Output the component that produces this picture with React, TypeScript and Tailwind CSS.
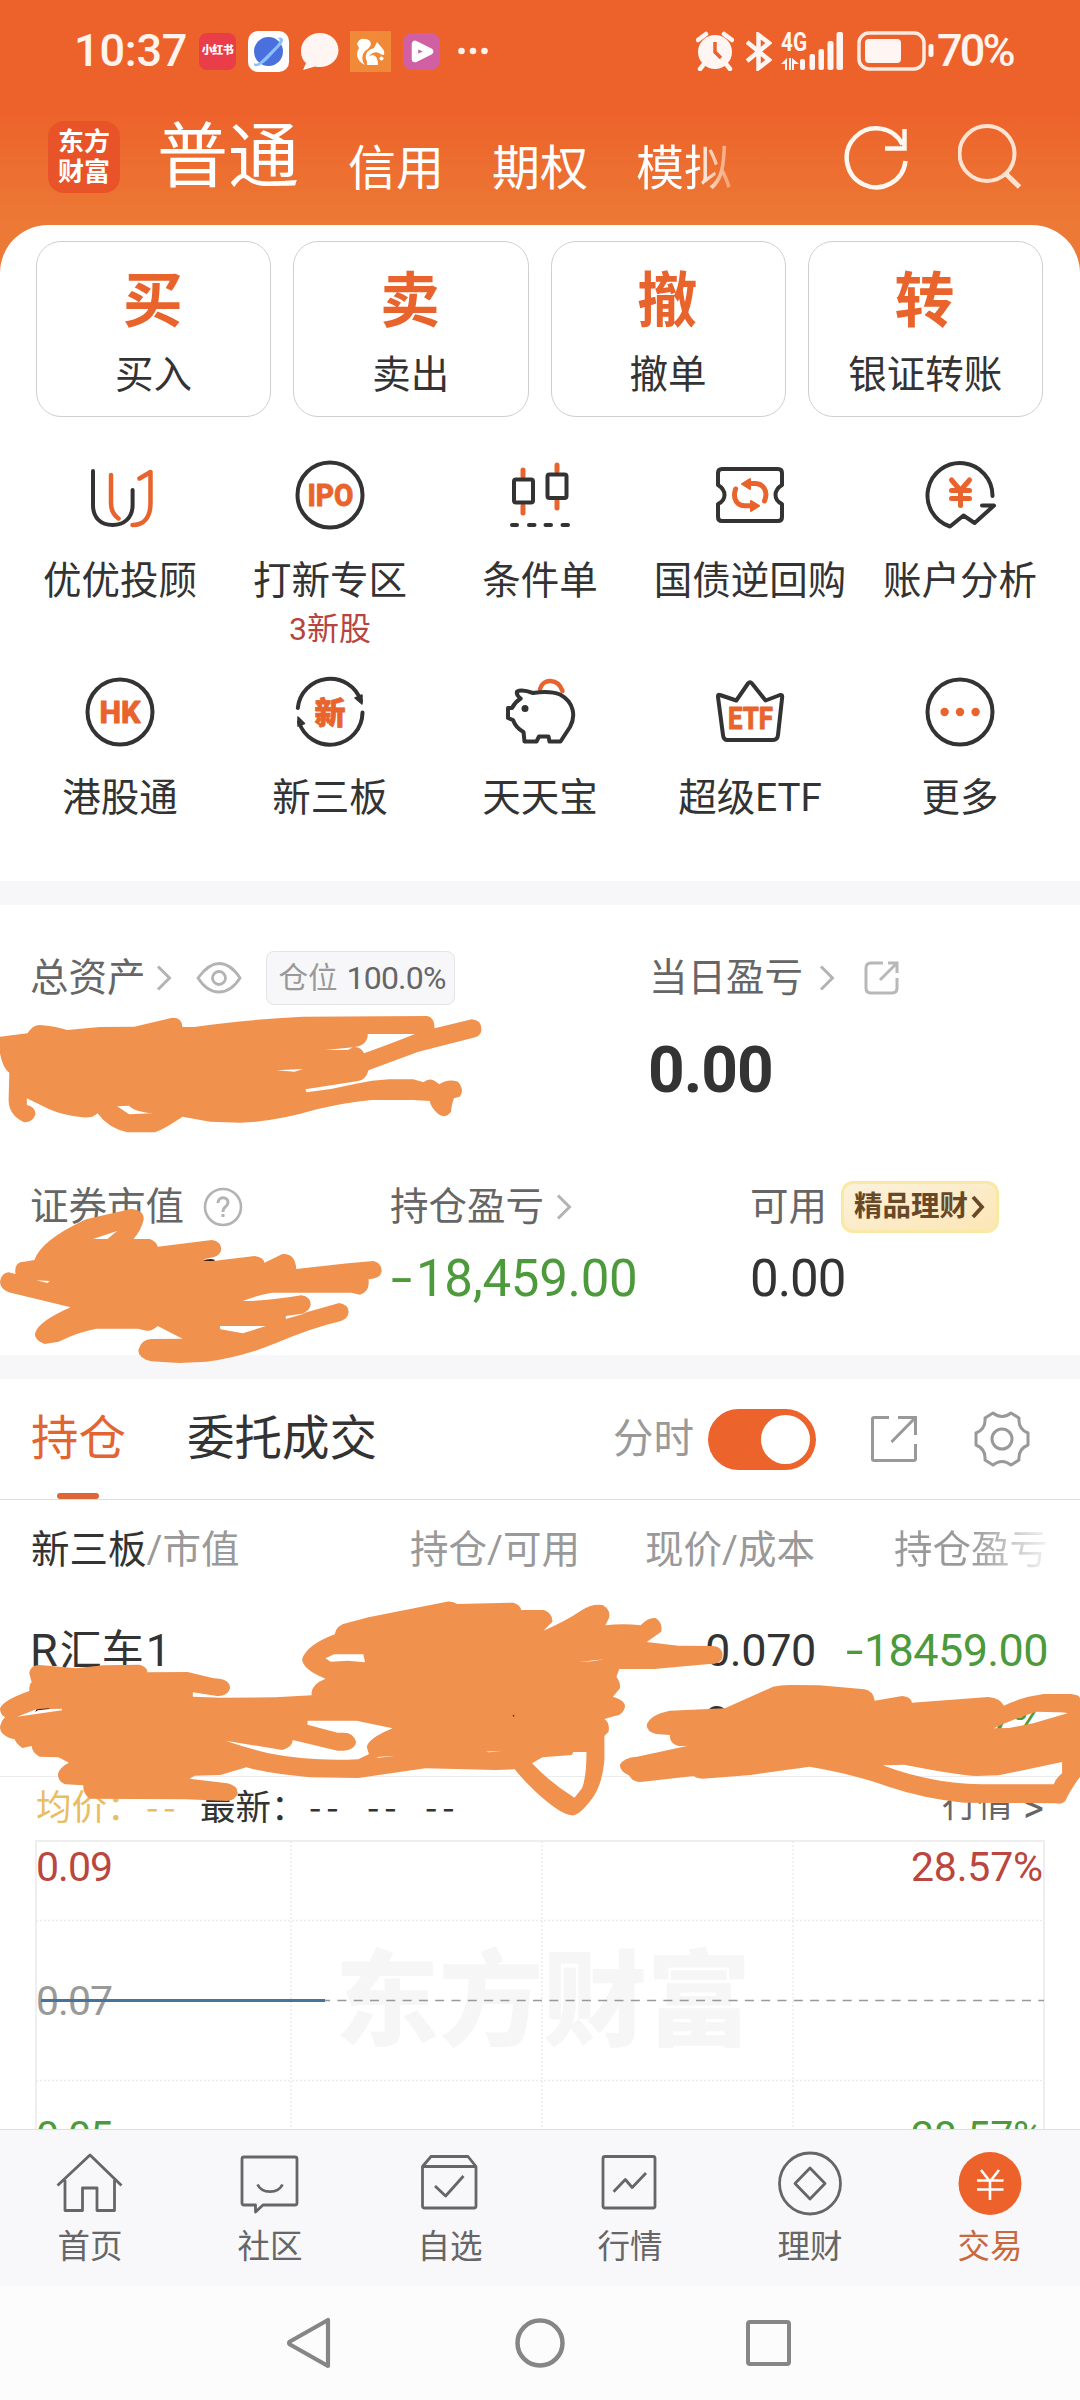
import type { ReactNode } from "react";

const INK = "#333333";
const ORANGE = "#e8642c";

const trades = [
  { glyph: "买", label: "买入" },
  { glyph: "卖", label: "卖出" },
  { glyph: "撤", label: "撤单" },
  { glyph: "转", label: "银证转账" },
];

function GridIcon({ children }: { children: ReactNode }) {
  return (
    <svg
      className="h-[68px] w-[68px] overflow-visible"
      viewBox="0 0 68 68"
      fill="none"
      stroke={INK}
      strokeWidth="4"
      strokeLinecap="round"
      strokeLinejoin="round"
    >
      {children}
    </svg>
  );
}

function IconText({ x = 34, y, size, width, children }: { x?: number; y: number; size: number; width?: number; children: string }) {
  return (
    <text
      x={x}
      y={y}
      fontSize={size}
      fontWeight="800"
      fill={ORANGE}
      stroke={ORANGE}
      strokeWidth="0.8"
      textAnchor="middle"
      textLength={width}
      lengthAdjust="spacingAndGlyphs"
    >
      {children}
    </text>
  );
}

const features: { label: string; note?: string; icon: ReactNode }[] = [
  {
    label: "优优投顾",
    icon: (
      <>
        <path d="M7 10V44C7 57 15 64 26.500 64S46.600 57 46.600 44V29" />
        <path stroke={ORANGE} strokeWidth="4.500" d="M25 14V42Q25 52 32.500 57.500M53.500 17.500L64.500 11V42C64.500 56 58 64 46.500 64" />
      </>
    ),
  },
  {
    label: "打新专区",
    note: "3新股",
    icon: (
      <>
        <circle cx="34" cy="34" r="32.500" />
        <IconText x={34.500} y={45} size={31} width={46}>IPO</IconText>
      </>
    ),
  },
  {
    label: "条件单",
    icon: (
      <>
        <path stroke={ORANGE} strokeWidth="5" d="M17 9V15M17 45V52M51 4V10M51 40V47" />
        <rect x="8" y="18.500" width="19" height="23" rx="2" />
        <rect x="41.500" y="13.500" width="19" height="23.500" rx="2" />
        <path d="M6 64H11M23 64H28.500M39.500 64H45M56.500 64H62" />
      </>
    ),
  },
  {
    label: "国债逆回购",
    icon: (
      <>
        <path d="M6 8H62Q66 8 66 12V24Q59.500 28 59.500 34T66 43V56Q66 60 62 60H6Q2 60 2 56V43Q8.500 40 8.500 34T2 24V12Q2 8 6 8Z" />
        <path stroke={ORANGE} strokeWidth="5" d="M48.500 40C53 29 46 22.500 39 22.500H33M19.600 28C16 39 22 44.800 29 44.800H35" />
        <path fill={ORANGE} stroke={ORANGE} strokeWidth="2" d="M34 18V28L26 23ZM35 40V50L43 44.800Z" />
      </>
    ),
  },
  {
    label: "账户分析",
    icon: (
      <>
        <path d="M66.500 35A32.500 32.500 0 1 0 24 65.500L37.500 54.500L48.600 62L68 44.600H56" />
        <path stroke={ORANGE} strokeWidth="5" d="M25.500 19L34.500 29.500L43.500 19M34.500 30V44.500M25.500 29.500H43.500M25.500 37.500H43.500" />
      </>
    ),
  },
  {
    label: "港股通",
    icon: (
      <>
        <circle cx="34" cy="34" r="32.500" />
        <IconText y={45} size={31} width={41}>HK</IconText>
      </>
    ),
  },
  {
    label: "新三板",
    icon: (
      <>
        <path d="M1.800 30A32.500 32.500 0 0 1 65 23M66.500 34.500A32.500 32.500 0 0 1 3 44" />
        <path fill={INK} strokeWidth="1.500" d="M59 20L66 17V26ZM2 39L8.500 45.500L2 48Z" />
        <IconText y={45.500} size={31}>新</IconText>
      </>
    ),
  },
  {
    label: "天天宝",
    icon: (
      <>
        <path stroke={ORANGE} strokeWidth="4.500" d="M34 11C37 0 52 0 56.500 13" />
        <path d="M11 13.500Q16 11 27 15Q44 12.500 54 16.500C68 24 70 38 64 49L54.500 63.500H43.500L42.500 58.500H33L30.500 63.500H18.500L17.500 54Q10 50 7 42L2 40V30H6Q9 24 14.700 20.500Q10 17 11 13.500Z" />
        <circle cx="19" cy="30.500" r="3.500" fill={INK} stroke="none" />
      </>
    ),
  },
  {
    label: "超级ETF",
    icon: (
      <>
        <path d="M4 17L20.300 22.500L32 5.500Q34 3 36 5.500L49.600 22.500L64 17Q66.500 16.500 66.200 19L62 57Q61.500 62 57 62H11.500Q7.500 62 7 57L2 19Q1.700 16 4 17Z" />
        <IconText x={34.500} y={51} size={31} width={45}>ETF</IconText>
      </>
    ),
  },
  {
    label: "更多",
    icon: (
      <>
        <circle cx="34" cy="34" r="32.500" />
        <g fill={ORANGE} stroke="none">
          <circle cx="18.600" cy="34" r="4.200" />
          <circle cx="34" cy="34" r="4.200" />
          <circle cx="49.600" cy="34" r="4.200" />
        </g>
      </>
    ),
  },
];

const tabs: { label: string; active?: boolean; icon: ReactNode }[] = [
  { label: "首页", icon: <path d="M3.500 38.500L36 8L67.500 38.500M11 33V63.500H28.500V41H43V63.500H60.500V33" /> },
  {
    label: "社区",
    icon: <path d="M10 10H61Q63 10 63 12V56Q63 58 61 58H29L21.500 65V58H10Q8 58 8 56V12Q8 10 10 10ZM23.500 37.500C28 47 44 47 48.500 37.500" />,
  },
  {
    label: "自选",
    icon: <path d="M8.500 19.500L17 9.500H54L62 19.500V59Q62 61 60 61H10.500Q8.500 61 8.500 59ZM8.500 19.500H62M21 39L31.600 49L49.500 29" />,
  },
  {
    label: "行情",
    icon: <path d="M11 9.500H59Q61 9.500 61 11.500V59Q61 61 59 61H11Q9 61 9 59V11.500Q9 9.500 11 9.500ZM19.600 44.700L31.300 32.500L38.200 40.500L52 26" />,
  },
  {
    label: "理财",
    icon: (
      <>
        <circle cx="36" cy="36.500" r="30.500" />
        <path d="M36 21L51 36.500L36 52L21 36.500Z" />
      </>
    ),
  },
  {
    label: "交易",
    active: true,
    icon: (
      <>
        <circle cx="36" cy="36.500" r="31.500" fill="#ed622b" stroke="none" />
        <path stroke="#fff" strokeWidth="2.600" d="M27 23L36 34.500L45 23M36 34.500V53M23 33.500H49.500M23 42.500H49.500" />
      </>
    ),
  },
];

function Chevron({ className = "" }: { className?: string }) {
  return (
    <svg className={className} width="16" height="26" viewBox="0 0 16 26" fill="none" stroke="#b3b3b3" strokeWidth="3">
      <path d="M2 1.500L13.500 13L2 24.500" />
    </svg>
  );
}

function StatusBar() {
  return (
    <div className="flex h-[102px] items-center pl-[74px] text-white">
      <span className="w-[125px] text-[45px] leading-[50px] font-medium tracking-[-0.200px] text-[#fff3ee]">10:37</span>
      <div className="flex h-[37px] w-[37px] items-center justify-center rounded-lg bg-[#e93e49] text-[11px] font-black tracking-[-0.500px]">小红书</div>
      <svg className="ml-3" width="41" height="41" viewBox="0 0 41 41">
        <rect width="41" height="41" rx="10" fill="#fff" />
        <circle cx="20.500" cy="20.500" r="14.500" fill="#4a70de" />
        <path d="M6 32C5 38 13 35 20 28L33 14C37 8 35 5 29 7C34 8 31 12 28 15L15 28C11 32 8 34 6 32Z" fill="#8cc0fb" />
      </svg>
      <svg className="ml-3" width="38" height="39" viewBox="0 0 38 39">
        <path d="M19 1C9 1 0 8 0 19Q0 27 5 31L2 38L14 34.500Q16 35 19 35C29 35 37.500 28 37.500 18S29 1 19 1Z" fill="#fff5f2" />
      </svg>
      <svg className="ml-[11px]" width="41" height="41" viewBox="0 0 41 41">
        <rect width="41" height="41" fill="#f08a38" />
        <path d="M7 13Q9 7 15 8Q20 8 21 13Q20 17 15 20Q11 25 13 31L15 34Q8 31 7 24Q7 20 9 17ZM27 11L32 17Q35 20 34 24Q31 24 29 22Q24 20 20 24Q17 28 18 32Q14 27 17 21Q20 18 24 17Z" fill="#fff" />
        <path d="M17 34Q16 24 23 24Q28 25 28 34Z" fill="#fff" />
        <circle cx="31.500" cy="27.500" r="2" fill="#fff" />
      </svg>
      <svg className="ml-3" width="37" height="37" viewBox="0 0 37 37">
        <rect width="37" height="37" rx="9" fill="#d05fa4" />
        <path d="M12 11V26L27 18.500Z" fill="#d05fa4" stroke="#fff" strokeWidth="6.500" strokeLinejoin="round" />
      </svg>
      <svg className="ml-[18px]" width="30" height="8" viewBox="0 0 30 8" fill="#fff0ea">
        <circle cx="3.500" cy="4" r="3.300" />
        <circle cx="15" cy="4" r="3.300" />
        <circle cx="26.500" cy="4" r="3.300" />
      </svg>
      <svg className="ml-[208px]" width="38" height="40" viewBox="0 0 38 40" fill="#fff5f2">
        <circle cx="19" cy="21" r="17" />
        <path d="M2 9L10 3M28 3L36 9M8 33L4 38M30 33L34 38" stroke="#fff5f2" strokeWidth="4.500" strokeLinecap="round" />
        <path d="M19 11V21L25 27" fill="none" stroke="#ed622b" strokeWidth="3.500" />
      </svg>
      <svg className="ml-3" width="26" height="39" viewBox="0 0 26 39" fill="none" stroke="#fff5f2" strokeWidth="4.500">
        <path d="M1 10L23 28L12.500 36V3L23 11L1 29" />
      </svg>
      <svg className="ml-[9px] overflow-visible" width="64" height="40" viewBox="0 0 64 40" fill="#fff5f2">
        <text x="0" y="20" fontSize="26" fontWeight="700" textLength="26" lengthAdjust="spacingAndGlyphs">4G</text>
        <path d="M0 33L6 27V39H4V33ZM8 27H10V39H8ZM11 27L18 33H13V39H11Z" />
        <rect x="19" y="28" width="5" height="11" rx="2" />
        <rect x="28.500" y="23" width="5.500" height="16" rx="2" />
        <rect x="37.500" y="18" width="5.500" height="21" rx="2" />
        <rect x="46.500" y="10" width="6" height="29" rx="2" />
        <rect x="55.500" y="1" width="6.500" height="38" rx="2" />
      </svg>
      <svg className="ml-3" width="78" height="40" viewBox="0 0 78 40">
        <rect x="2" y="2" width="65" height="36" rx="10" fill="none" stroke="#fdeae2" strokeWidth="3.500" />
        <rect x="8" y="8" width="36" height="24" rx="4" fill="#fff5f2" />
        <rect x="71.500" y="13" width="5" height="13" rx="2" fill="#fff5f2" />
      </svg>
      <span className="ml-[2px] text-[45px] leading-[50px] font-medium tracking-[-2.800px] text-[#fff3ee]">70%</span>
    </div>
  );
}

function TopBar() {
  return (
    <div className="flex h-[123px] pl-12 text-white">
      <div className="mt-[19px] flex h-[72px] w-[72px] flex-col items-center justify-center rounded-[16px] bg-[#e95329] text-[26px] leading-[30px] font-bold">
        <span>东方</span>
        <span>财富</span>
      </div>
      <span className="ml-[37px] w-[191px] pt-[15px] text-[71px] leading-[80px]">普通</span>
      <div className="flex gap-12 pt-[37px] text-[48px] leading-[60px]">
        <span>信用</span>
        <span>期权</span>
        <span className="bg-linear-to-r from-white from-60% to-[#f39a66] bg-clip-text text-transparent">模拟</span>
      </div>
      <svg className="mt-[22px] ml-[112px]" width="66" height="66" viewBox="0 0 66 66" fill="none" stroke="#fff8f0" strokeWidth="4.500">
        <path d="M61.500 37A29.500 29.500 0 1 1 58.500 20.500M60.500 5V24.500H41" />
      </svg>
      <svg className="mt-[22px] ml-[48px]" width="66" height="66" viewBox="0 0 66 66" fill="none" stroke="#ffe3d2" strokeWidth="4">
        <circle cx="29" cy="29.500" r="27.500" />
        <path d="M47 49L61.500 63" strokeWidth="5" />
      </svg>
    </div>
  );
}

function Assets() {
  return (
    <section className="h-[450px] bg-white pt-[46px] pl-[30px] text-[38.500px] leading-[52px] text-[#666]">
      <div className="flex h-[230px]">
        <div className="flex h-[53px] w-[619px] items-center">
          <span>总资产</span>
          <Chevron className="ml-[10px]" />
          <svg className="ml-6" width="46" height="34" viewBox="0 0 46 34" fill="none" stroke="#b3b3b3" strokeWidth="2.800">
            <path d="M2 17C10 6 16 2.500 23 2.500S37 6 44 17C37 28 30 31 23 31S9 28 2 17Z" />
            <circle cx="23" cy="17" r="6.500" />
          </svg>
          <div className="ml-6 flex h-[54px] w-[189px] items-center gap-[9px] rounded-lg border-[1.500px] border-[#e4e4e8] bg-[#f7f7fa] pl-3">
            <span className="text-[29.500px] text-[#999]">仓位</span>
            <span className="text-[32px] tracking-[-0.800px]">100.0%</span>
          </div>
        </div>
        <div>
          <div className="flex h-[53px] items-center">
            <span>当日盈亏</span>
            <Chevron className="ml-4" />
            <svg className="ml-7" width="36" height="36" viewBox="0 0 36 36" fill="none" stroke="#b8b8b8" strokeWidth="3">
              <path d="M20 3H8Q3 3 3 8V28Q3 33 8 33H29Q34 33 34 28V18M25 3H34V13M34 3L17 20" />
            </svg>
          </div>
          <div className="mt-[37px] -ml-[1px] text-[64px] leading-[60px] font-bold tracking-[-1px] text-[#333]">0.00</div>
        </div>
      </div>
      <div className="flex">
        <div className="flex h-[52px] w-[360px] items-center">
          <span>证券市值</span>
          <svg className="ml-[19px]" width="40" height="40" viewBox="0 0 40 40" fill="none" stroke="#b3b3b3" strokeWidth="2.600">
            <circle cx="20" cy="20" r="18" />
            <path d="M15 16C15 9 25 9 25 15.500C25 20 20 19 20 25M20 27V30" strokeWidth="3" />
          </svg>
        </div>
        <div className="w-[360px]">
          <div className="flex h-[52px] items-center">
            <span>持仓盈亏</span>
            <Chevron className="ml-[12px]" />
          </div>
          <div className="mt-[20px] ml-[1px] text-[51px] leading-[52px] text-[#4c9a3b]">
            <span className="inline-block w-[25px] origin-left scale-x-150">-</span>
            <span className="tracking-[-0.300px]">18,459.00</span>
          </div>
        </div>
        <div>
          <div className="flex h-[52px] items-center">
            <span>可用</span>
            <div className="ml-[14px] flex h-[52px] w-[158px] items-center rounded-[12px] border-[3px] border-[#f8e9a4] bg-linear-to-br from-[#fbf1dc] to-[#fde6b5] pl-[10px] text-[28.500px] font-bold text-[#694827]">
              精品理财
              <svg className="ml-[3px]" width="14" height="24" viewBox="0 0 14 24" fill="none" stroke="#694827" strokeWidth="3.800">
                <path d="M2 2L11 12L2 22" />
              </svg>
            </div>
          </div>
          <div className="mt-[20px] text-[51px] leading-[52px] tracking-[-1px] text-[#333]">0.00</div>
        </div>
      </div>
    </section>
  );
}

function Chart() {
  return (
    <svg className="block" width="1080" height="289" viewBox="0 0 1080 289" fill="none">
      <text x="543" y="198" fontSize="104" fontWeight="900" fill="#f6f6f6" textAnchor="middle">东方财富</text>
      <path d="M36 289V1H1044V289" stroke="#eeeeee" strokeWidth="2" />
      <path d="M291 1V289M542 1V289M793 1V289M36 80.500H1044M36 240.500H1044" stroke="#ececec" strokeWidth="1.500" strokeDasharray="2 2" />
      <path d="M44 160.500H1044" stroke="#999" strokeWidth="1.400" strokeDasharray="9 7.300" />
      <g fontSize="41">
        <text x="36" y="41" fill="#bb4640" textLength="77">0.09</text>
        <text x="36" y="175" fill="#999" textLength="77">0.07</text>
        <text x="36" y="310" fill="#4c9a3b" textLength="77">0.05</text>
        <text x="911" y="41" fill="#bb4640" textLength="132">28.57%</text>
        <text x="911" y="310" fill="#4c9a3b" textLength="132">28.57%</text>
      </g>
      <path d="M41 160.500H325" stroke="#47739a" strokeWidth="3" />
    </svg>
  );
}

function Holdings() {
  return (
    <section className="h-[750px] overflow-hidden bg-white">
      <div className="flex h-[121px] items-center border-b-[1.500px] border-[#dedede] pl-[31px] text-[47.500px] leading-[60px]">
        <div className="relative flex h-[120px] w-[156px] items-center text-[#e2642f]">
          持仓
          <span className="absolute bottom-0 left-[26px] h-[6px] w-[42px] rounded-full bg-[#dd6636]" />
        </div>
        <span className="w-[426px] text-[#333]">委托成交</span>
        <span className="w-[95px] text-[40.500px] text-[#999]">分时</span>
        <div className="flex h-[61px] w-[108px] items-center justify-end rounded-full bg-[#ed632c] pr-[6px]">
          <span className="h-[49px] w-[49px] rounded-full bg-white" />
        </div>
        <svg className="ml-[54px]" width="48" height="48" viewBox="0 0 48 48" fill="none" stroke="#999" strokeWidth="3">
          <path d="M19 2.500H4Q2.500 2.500 2.500 4V44Q2.500 45.500 4 45.500H43.500Q45.500 45.500 45.500 44V29M28 2.500H45.500V20M45.500 2.500L21.500 27" />
        </svg>
        <svg className="ml-[56px]" width="56" height="56" viewBox="0 0 56 56" fill="none" stroke="#999" strokeWidth="3" strokeLinejoin="round">
          <path d="M19 2Q28 9 37 2L45 7Q44 18 54 22V34Q44 38 45 49L37 54Q28 47 19 54L11 49Q12 38 2 34V22Q12 18 11 7Z" />
          <circle cx="28" cy="28" r="10" />
        </svg>
      </div>
      <div className="flex h-[97px] items-center pt-[2px] pl-[31px] text-[38.500px] text-[#999]">
        <span className="w-[280px]">
          <span className="text-[#333]">新三板</span>/市值
        </span>
        <span className="w-[269px] text-right">持仓/可用</span>
        <span className="w-[235px] text-right">现价/成本</span>
        <span className="ml-[79px] bg-linear-to-r from-[#999] from-50% to-[#f4f4f4] bg-clip-text text-transparent">持仓盈亏</span>
      </div>
      <div className="flex h-[180px] border-b-[1.500px] border-[#ececec] pt-[29px] pl-[30px] text-[45px] leading-[50px] text-[#333]">
        <div className="flex w-[550px]">
          <span>R</span>
          <span className="ml-[2px] text-[42px]">汇车</span>
          <span className="ml-[2px]">1</span>
        </div>
        <div className="flex w-[236px] flex-col items-end gap-[22px]">
          <span className="tracking-[-0.400px]">0.070</span>
          <span className="w-[112px]">0</span>
        </div>
        <div className="flex w-[232px] flex-col items-end gap-[22px] text-[#4c9a3b]">
          <span className="tracking-[-0.600px]">
            <span className="inline-block w-[18px] origin-left scale-x-140">-</span>18459.00
          </span>
          <span className="pr-[5px] tracking-[-1px]">7%</span>
        </div>
      </div>
      <div className="flex h-[63px] items-center justify-between pr-9 pl-9 text-[35.500px] text-[#333]">
        <div className="-mt-[7px] flex font-['Noto_Sans_CJK_SC']">
          <span className="w-[110px] whitespace-nowrap text-[#e9bd62]">均价：</span>
          <span className="w-[54px] tracking-[5px] text-[#e9bd62]">--</span>
          <span className="w-[109px] whitespace-nowrap">最新：</span>
          <span className="w-[58px] tracking-[5px]">--</span>
          <span className="w-[58px] tracking-[5px]">--</span>
          <span className="tracking-[5px]">--</span>
        </div>
        <span className="flex gap-[10px] text-[#666]">
          行情 <span className="text-[40px]">&gt;</span>
        </span>
      </div>
      <Chart />
    </section>
  );
}

// Marker strokes painted over the private figures
function Redactions() {
  return (
    <>
      <svg className="absolute top-[900px] left-0" width="540" height="480" viewBox="0 0 1568 1440" preserveAspectRatio="none" fill="#f0914e" fillRule="evenodd">
        <path d="M0 410L80 400Q95 375 115 375Q160 378 195 390L290 381L390 380L500 353Q528 352 530 381L565 381Q700 360 880 350L1240 348Q1262 352 1262 385L1370 358Q1398 360 1398 388Q1398 405 1380 412L1215 455L1070 511Q1062 540 1040 543L887 568L890 577Q960 570 1030 552Q1080 540 1130 538L1200 538L1230 547Q1250 527 1275 553Q1300 535 1330 545Q1350 570 1335 590L1318 595Q1310 620 1310 635Q1290 660 1270 640Q1250 620 1248 603L1200 600L1080 600Q1000 608 920 628Q800 665 700 668L610 665L530 650Q480 685 450 697L370 697Q315 685 283 640Q270 655 240 652Q180 645 140 626L78 595V615Q103 620 103 643Q95 668 70 667Q25 645 25 600L27 518Q8 505 0 460ZM1068 402L1205 402Q1150 425 1057 460Q1050 442 1030 441Q1068 435 1068 402ZM340 619L375 617Q390 635 445 640L375 643ZM945 450L1025 442L1010 450ZM803 511L880 507L855 515Z" />
        <path d="M100 1080Q120 1020 250 958L380 927Q420 930 417 960Q410 990 388 1017L435 1017Q455 1025 458 1040L615 1020Q645 1025 642 1050Q640 1065 620 1072L590 1078L625 1082L740 1068Q765 1072 768 1088L820 1062Q858 1060 860 1107L1010 1090L1085 1083Q1110 1090 1108 1115Q1105 1135 1070 1138Q1075 1175 1045 1184L1020 1178L790 1178Q750 1185 705 1203Q780 1203 875 1186Q903 1190 902 1215Q900 1230 880 1240L985 1209Q1015 1215 1012 1238Q1010 1255 990 1263Q900 1285 800 1330Q700 1372 600 1385L520 1389L440 1384Q400 1375 402 1350Q410 1318 440 1317L530 1316L458 1278Q440 1295 425 1292L400 1286L280 1286Q230 1295 170 1325L130 1332Q98 1320 102 1300Q110 1265 205 1222L130 1203L25 1177Q0 1165 0 1145Q5 1118 25 1117L45 1122Q40 1085 70 1085ZM270 1017L340 993L312 1017ZM105 1141L145 1143L138 1149ZM830 1248L888 1240L830 1257ZM638 1278L772 1278L705 1300L640 1288Z" />
        <path d="M590 1083Q607 1073 625 1080L620 1083Z" fill="#3a1d0e" />
      </svg>
      <svg className="absolute top-[1370px] left-0" width="1080" height="450" viewBox="0 0 3136 1350" preserveAspectRatio="none" fill="#f0914e" fillRule="evenodd">
        <path d="M85 910Q88 885 115 885L220 895L300 886L405 884Q428 890 428 907L545 906L620 925Q668 925 668 955Q660 980 630 978L560 967V980L640 983L800 982L905 976Q900 945 945 926Q880 900 877 868Q890 825 972 793Q975 765 1010 758L1070 742L1290 697Q1310 690 1328 702L1490 698Q1512 705 1513 720L1580 720Q1605 730 1604 755L1578 782Q1640 755 1690 720Q1720 700 1750 705Q1775 720 1768 745L1758 766Q1810 760 1860 766Q1885 740 1905 745Q1925 760 1920 785L1878 816L1970 827L2070 828Q2100 830 2098 860Q2095 882 2060 882L1900 897L1798 897L1790 920Q1803 940 1800 955L1780 980Q1815 990 1815 1010Q1810 1035 1785 1038L1755 1047Q1772 1060 1767 1085L1755 1098V1170Q1750 1240 1720 1285Q1680 1340 1660 1336Q1630 1335 1560 1270Q1510 1220 1495 1198L1440 1200L1235 1195L1040 1224L900 1222Q780 1210 715 1192L640 1215L565 1217L550 1226L660 1240Q692 1248 690 1270Q685 1290 660 1293L540 1288L260 1286Q240 1270 242 1246L190 1243Q168 1235 168 1212Q175 1190 200 1178L170 1162L115 1160Q93 1148 92 1128L65 1134Q45 1120 43 1108Q0 1098 0 1070Q5 1050 15 1042Q0 1035 0 1015Q10 990 85 963Q85 940 92 937ZM655 1112L820 1140Q850 1130 850 1110L980 1142Q1030 1145 1034 1115Q1025 1088 1000 1088L980 1088L893 1064V1052H1035L1140 1075Q1070 1105 1065 1130Q1070 1150 1072 1152L1040 1168Q900 1175 780 1150Q720 1135 655 1112ZM945 865L970 853L1055 853L1060 877L1010 872L960 875ZM1545 1180L1575 1162L1660 1155L1665 1146H1703Q1703 1220 1690 1255L1668 1283Q1600 1240 1545 1180ZM50 1040L105 1018L180 1016V1021L90 1034ZM1680 876L1755 868L1720 874ZM1092 1161L1145 1158L1100 1163ZM1410 1145L1460 1142L1420 1147Z" />
        <path d="M1878 1065Q1885 1035 1945 1022L2105 1015L2245 950Q2270 944 2300 945L2380 946L2510 958Q2535 962 2540 992L2620 978Q2645 980 2648 998L2870 981Q2905 985 2915 1007Q2970 980 3030 972L3110 972Q3136 975 3136 985V1220Q3105 1265 3095 1290Q3085 1305 3065 1300L2800 1298Q2680 1285 2580 1250Q2470 1210 2350 1190Q2280 1200 2180 1215L2040 1226Q2020 1225 2015 1218L1860 1236Q1835 1235 1828 1217Q1800 1205 1800 1185Q1810 1162 1850 1160L1998 1127Q1945 1135 1945 1095L1905 1092Q1878 1085 1878 1065ZM2563 1186L2625 1184Q2780 1215 2835 1218L2900 1216L3084 1176V1210Q3065 1225 3060 1243L2850 1243Q2700 1240 2563 1186ZM2885 1075Q2960 1040 3010 1025L3070 1027Q3090 1027 3100 1030Q3050 1045 3000 1060L2930 1074Z" />
        <path d="M102 1026L106 1018L143 1015V1017L110 1021ZM1488 1037L1493 1034V1041Z" fill="#3a1d0e" />
      </svg>
    </>
  );
}

export default function App() {
  return (
    <div className="relative h-[2400px] w-[1080px] overflow-hidden bg-[#f7f7fa] font-[Roboto,'Noto_Sans_CJK_SC',sans-serif]">
      <div className="bg-linear-to-b from-[#ed622b] from-[110px] to-[#ec7935] to-[225px]">
        <StatusBar />
        <TopBar />
        <section className="h-[656px] rounded-t-[48px] bg-white pt-4">
          <div className="flex gap-[22px] pr-[37px] pl-9">
            {trades.map((t) => (
              <div key={t.label} className="flex h-[176px] flex-1 flex-col items-center rounded-[25px] border-[1.500px] border-[#cfcfcf]">
                <span className="mt-[23px] mr-[2px] text-[60px] leading-[74px] font-bold text-[#e8642c]">{t.glyph}</span>
                <span className="mt-[10px] text-[38.500px] leading-[52px] text-[#333]">{t.label}</span>
              </div>
            ))}
          </div>
          <div className="mt-11 grid grid-cols-5 px-[15px]">
            {features.map((f) => (
              <div key={f.label} className="flex h-[217px] flex-col items-center whitespace-nowrap">
                <GridIcon>{f.icon}</GridIcon>
                <span className="mt-[26px] text-[38.500px] leading-[52px] text-[#333]">{f.label}</span>
                {f.note && <span className="mt-1 text-[32px] leading-[36px] text-[#b8443f]">{f.note}</span>}
              </div>
            ))}
          </div>
        </section>
      </div>

      <div className="mt-6">
        <Assets />
      </div>
      <div className="mt-6">
        <Holdings />
      </div>

      {/* Bottom tabs */}
      <nav className="grid h-[157px] grid-cols-6 border-t-[1.500px] border-[#dfdfe2] bg-[#f8f8fa]">
        {tabs.map((t) => (
          <div key={t.label} className={t.active ? "flex flex-col items-center text-[#c9683c]" : "flex flex-col items-center text-[#666]"}>
            <svg className="mt-[17px]" width="72" height="72" viewBox="0 0 72 72" fill="none" stroke="#666" strokeWidth="2.800" strokeLinejoin="round">
              {t.icon}
            </svg>
            <span className="mt-[8px] text-[32.500px] leading-[40px]">{t.label}</span>
          </div>
        ))}
      </nav>

      {/* System navigation */}
      <div className="flex h-[114px] items-center bg-[#fcfcfc] pl-[286px]">
        <svg width="46" height="54" viewBox="0 0 46 54" fill="none" stroke="#868686" strokeWidth="4.200" strokeLinejoin="round">
          <path d="M42 4V50L4 28.500Q2 27 4 25.500Z" />
        </svg>
        <svg className="ml-[182px]" width="52" height="52" viewBox="0 0 52 52" fill="none" stroke="#868686" strokeWidth="4.500">
          <circle cx="26" cy="26" r="22.500" />
        </svg>
        <span className="ml-[180px] h-[46px] w-[45px] rounded-[4px] border-[4.500px] border-[#868686]" />
      </div>

      <Redactions />
    </div>
  );
}
